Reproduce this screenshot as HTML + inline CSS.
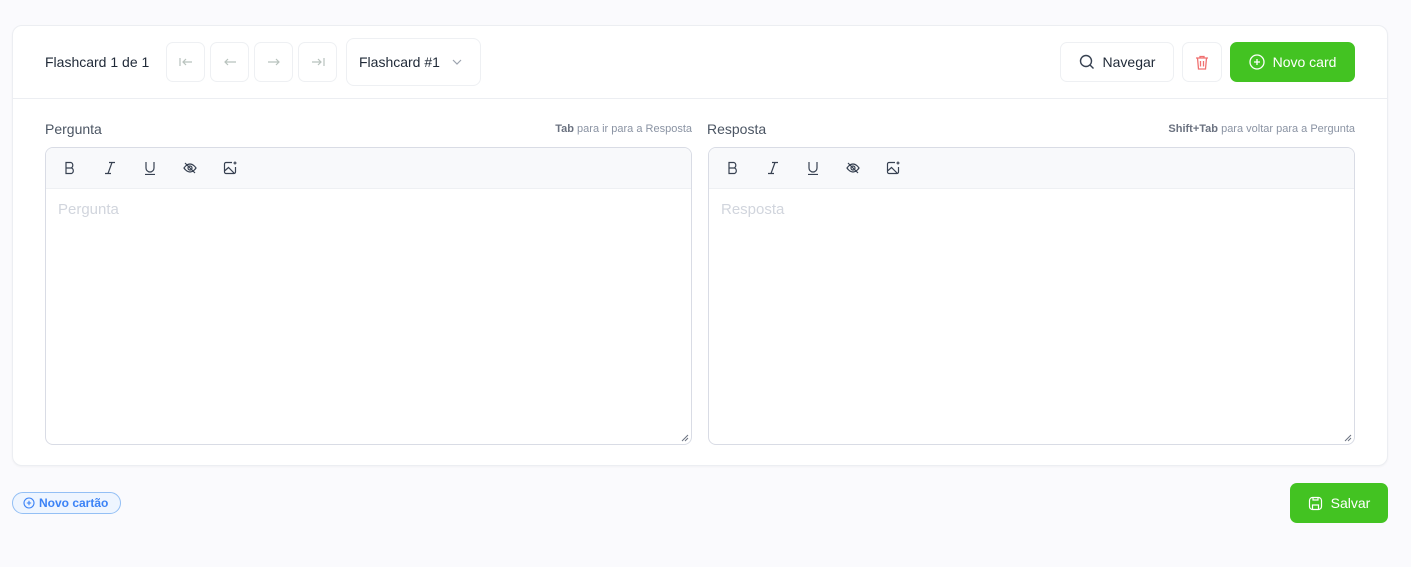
<!DOCTYPE html>
<html><head><meta charset="utf-8"><style>
*{box-sizing:border-box;margin:0;padding:0}
body{width:1411px;height:567px;background:#fafafd;font-family:"Liberation Sans",sans-serif;position:relative;overflow:hidden;color:#1f2937}
.card{position:absolute;left:12px;top:25px;width:1376px;height:441px;background:#fff;border:1px solid #eceef2;border-radius:10px;box-shadow:0 1px 2px rgba(0,0,0,.04)}
.hdr{position:absolute;left:0;top:0;right:0;height:73px;border-bottom:1px solid #eceef2}
.abs{position:absolute}
.btn{position:absolute;border:1px solid #eef0f3;border-radius:7px;background:#fff;display:flex;align-items:center;justify-content:center}
.lbl{position:absolute;font-size:14px;color:#4b5563}
.hint{position:absolute;font-size:11px;color:#8a93a3}
.hint b{color:#6b7280}
.ed{position:absolute;top:121px;height:298px;border:1px solid #d9dce5;border-radius:8px;overflow:hidden;background:#fff}
.tb{height:41px;background:#f8f9fb;border-bottom:1px solid #eef0f3;position:relative}
.tb svg{position:absolute;top:13px}
.ph{position:absolute;left:12px;top:53px;font-size:15px;color:#d1d5dd}
.grip{position:absolute;right:2px;bottom:2px}
</style></head><body>
<div class="card">
 <div class="hdr">
  <div class="abs" style="left:32px;top:28px;font-size:14px;color:#1f2937">Flashcard 1 de 1</div>
  <div class="btn" style="left:153px;top:16px;width:39px;height:40px"><svg width="14" height="10" viewBox="0 0 14 10" fill="none" stroke="#b8c2bd" stroke-width="1.2"><path d="M1 1v8M13 5H4M7 2L4 5l3 3"/></svg></div>
  <div class="btn" style="left:197px;top:16px;width:39px;height:40px"><svg width="14" height="10" viewBox="0 0 14 10" fill="none" stroke="#b8c2bd" stroke-width="1.2"><path d="M13 5H2M5 2L2 5l3 3"/></svg></div>
  <div class="btn" style="left:241px;top:16px;width:39px;height:40px"><svg width="14" height="10" viewBox="0 0 14 10" fill="none" stroke="#b8c2bd" stroke-width="1.2"><path d="M1 5h11M9 2l3 3-3 3"/></svg></div>
  <div class="btn" style="left:285px;top:16px;width:39px;height:40px"><svg width="14" height="10" viewBox="0 0 14 10" fill="none" stroke="#b8c2bd" stroke-width="1.2"><path d="M13 1v8M1 5h9M7 2l3 3-3 3"/></svg></div>
  <div class="btn" style="left:333px;top:12px;width:135px;height:48px;border-radius:8px;justify-content:flex-start;padding-left:12px;font-size:14px;color:#1f2937">Flashcard #1<svg style="margin-left:12px" width="10" height="6" viewBox="0 0 10 6" fill="none" stroke="#9ca3af" stroke-width="1.2"><path d="M1 1l4 4 4-4"/></svg></div>
  <div class="btn" style="left:1047px;top:16px;width:114px;height:40px;font-size:14px;color:#1f2937"><svg width="16" height="16" viewBox="0 0 16 16" fill="none" stroke="#374151" stroke-width="1.4" style="margin-right:8px"><circle cx="7" cy="7" r="5.5"/><path d="M11 11l3.5 3.5"/></svg>Navegar</div>
  <div class="btn" style="left:1169px;top:16px;width:40px;height:40px"><svg width="14" height="15" viewBox="0 0 14 15" fill="none" stroke="#f07070" stroke-width="1.3"><path d="M1 3h12M5 3V1.5h4V3M2.5 3l1 11h7l1-11M5.5 6v5.5M8.5 6v5.5"/></svg></div>
  <div class="btn" style="left:1217px;top:16px;width:125px;height:40px;background:#43c322;border-color:#43c322;color:#fff;font-size:14px"><svg width="16" height="16" viewBox="0 0 16 16" fill="none" stroke="#fff" stroke-width="1.3" style="margin-right:8px"><circle cx="8" cy="8" r="7"/><path d="M8 5v6M5 8h6"/></svg>Novo card</div>
 </div>
 <div class="lbl" style="left:32px;top:95px">Pergunta</div>
 <div class="hint" style="right:695px;top:97px"><b>Tab</b> para ir para a Resposta</div>
 <div class="lbl" style="left:694px;top:95px">Resposta</div>
 <div class="hint" style="right:32px;top:97px"><b>Shift+Tab</b> para voltar para a Pergunta</div>
 <div class="ed" style="left:32px;width:647px">
  <div class="tb">
   <svg style="left:17px" width="14" height="14" viewBox="0 0 14 14" fill="none" stroke="#374151" stroke-width="1.2"><path d="M3 1.5h5a3 3 0 010 5.5H3zM3 7h5.5a3 3 0 010 5.5H3z"/></svg>
   <svg style="left:57px" width="14" height="14" viewBox="0 0 14 14" fill="none" stroke="#374151" stroke-width="1.2"><path d="M6 1.5h6M2 12.5h6M9 1.5l-4 11"/></svg>
   <svg style="left:97px" width="14" height="14" viewBox="0 0 14 14" fill="none" stroke="#374151" stroke-width="1.2"><path d="M3 1v6a4 4 0 008 0V1M2 13.5h10"/></svg>
   <svg style="left:137px" width="14" height="14" viewBox="0 0 14 14" fill="none" stroke="#374151" stroke-width="1.2"><path d="M1 7s2.5-4 6-4 6 4 6 4-2.5 4-6 4-6-4-6-4zM2 2l10 10"/><circle cx="7" cy="7" r="2"/></svg>
   <svg style="left:177px" width="14" height="14" viewBox="0 0 14 14" fill="none" stroke="#374151" stroke-width="1.2"><path d="M9 1.5H3a1.5 1.5 0 00-1.5 1.5v8A1.5 1.5 0 003 12.5h8a1.5 1.5 0 001.5-1.5V6M1.5 10l4-3.5 6 6M12 0.5v3M10.5 2h3"/></svg>
  </div>
  <div class="ph">Pergunta</div>
  <svg class="grip" width="8" height="8" viewBox="0 0 8 8" stroke="#6b7280"><path d="M1 7l6-6M4 7l3-3"/></svg>
 </div>
 <div class="ed" style="left:695px;width:647px">
  <div class="tb">
   <svg style="left:17px" width="14" height="14" viewBox="0 0 14 14" fill="none" stroke="#374151" stroke-width="1.2"><path d="M3 1.5h5a3 3 0 010 5.5H3zM3 7h5.5a3 3 0 010 5.5H3z"/></svg>
   <svg style="left:57px" width="14" height="14" viewBox="0 0 14 14" fill="none" stroke="#374151" stroke-width="1.2"><path d="M6 1.5h6M2 12.5h6M9 1.5l-4 11"/></svg>
   <svg style="left:97px" width="14" height="14" viewBox="0 0 14 14" fill="none" stroke="#374151" stroke-width="1.2"><path d="M3 1v6a4 4 0 008 0V1M2 13.5h10"/></svg>
   <svg style="left:137px" width="14" height="14" viewBox="0 0 14 14" fill="none" stroke="#374151" stroke-width="1.2"><path d="M1 7s2.5-4 6-4 6 4 6 4-2.5 4-6 4-6-4-6-4zM2 2l10 10"/><circle cx="7" cy="7" r="2"/></svg>
   <svg style="left:177px" width="14" height="14" viewBox="0 0 14 14" fill="none" stroke="#374151" stroke-width="1.2"><path d="M9 1.5H3a1.5 1.5 0 00-1.5 1.5v8A1.5 1.5 0 003 12.5h8a1.5 1.5 0 001.5-1.5V6M1.5 10l4-3.5 6 6M12 0.5v3M10.5 2h3"/></svg>
  </div>
  <div class="ph">Resposta</div>
  <svg class="grip" width="8" height="8" viewBox="0 0 8 8" stroke="#6b7280"><path d="M1 7l6-6M4 7l3-3"/></svg>
 </div>
</div>
<div class="abs" style="left:12px;top:492px;width:109px;height:22px;border:1px solid #93bff5;border-radius:11px;background:#eef5ff;display:flex;align-items:center;padding-left:10px;font-size:12px;font-weight:bold;color:#3b82f6"><svg width="12" height="12" viewBox="0 0 12 12" fill="none" stroke="#3b82f6" stroke-width="1.1" style="margin-right:4px"><circle cx="6" cy="6" r="5"/><path d="M6 3.8v4.4M3.8 6h4.4"/></svg>Novo cartão</div>
<div class="abs" style="left:1290px;top:483px;width:98px;height:40px;background:#43c322;border-radius:7px;display:flex;align-items:center;justify-content:center;color:#fff;font-size:14px"><svg width="15" height="15" viewBox="0 0 15 15" fill="none" stroke="#fff" stroke-width="1.2" style="margin-right:8px"><rect x="1.5" y="1.5" width="12" height="12" rx="3"/><path d="M5 1.5v2.5h5V1.5M4.5 13.5V9h6v4.5"/></svg>Salvar</div>
</body></html>
